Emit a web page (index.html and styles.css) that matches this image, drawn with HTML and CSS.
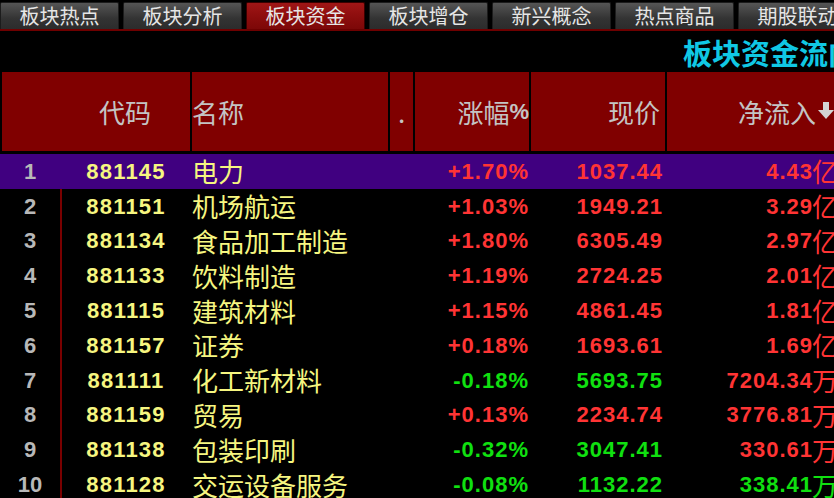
FILE: index.html
```html
<!DOCTYPE html>
<html lang="zh-CN">
<head>
<meta charset="utf-8">
<title>板块资金</title>
<link rel="stylesheet" href="styles.css">
</head>
<body>
<div class="app">
  <nav class="tabs">
    <div class="tab">板块热点</div>
    <div class="tab">板块分析</div>
    <div class="tab active">板块资金</div>
    <div class="tab">板块增仓</div>
    <div class="tab">新兴概念</div>
    <div class="tab">热点商品</div>
    <div class="tab">期股联动</div>
  </nav>
  <div class="titlebar"><span class="title">板块资金流向</span></div>
  <div class="table">
    <div class="row head">
      <div class="c num"></div>
      <div class="c code">代码</div>
      <div class="c name sep">名称</div>
      <div class="c dot sep">.</div>
      <div class="c chg sep">涨幅<span class="pct">%</span></div>
      <div class="c price sep">现价</div>
      <div class="c net sep">净流入<svg class="arrow" viewBox="0 0 16 18" width="16" height="18"><rect x="5" y="0" width="6" height="9"/><polygon points="0,8 16,8 8,17"/></svg></div>
    </div>
    <div class="row sel">
      <div class="c num">1</div><div class="c code">881145</div><div class="c name">电力</div><div class="c dot"></div>
      <div class="c chg up">+1.70%</div><div class="c price up">1037.44</div><div class="c net up">4.43<span class="unit">亿</span></div>
    </div>
    <div class="row">
      <div class="c num">2</div><div class="c code">881151</div><div class="c name">机场航运</div><div class="c dot"></div>
      <div class="c chg up">+1.03%</div><div class="c price up">1949.21</div><div class="c net up">3.29<span class="unit">亿</span></div>
    </div>
    <div class="row">
      <div class="c num">3</div><div class="c code">881134</div><div class="c name">食品加工制造</div><div class="c dot"></div>
      <div class="c chg up">+1.80%</div><div class="c price up">6305.49</div><div class="c net up">2.97<span class="unit">亿</span></div>
    </div>
    <div class="row">
      <div class="c num">4</div><div class="c code">881133</div><div class="c name">饮料制造</div><div class="c dot"></div>
      <div class="c chg up">+1.19%</div><div class="c price up">2724.25</div><div class="c net up">2.01<span class="unit">亿</span></div>
    </div>
    <div class="row">
      <div class="c num">5</div><div class="c code">881115</div><div class="c name">建筑材料</div><div class="c dot"></div>
      <div class="c chg up">+1.15%</div><div class="c price up">4861.45</div><div class="c net up">1.81<span class="unit">亿</span></div>
    </div>
    <div class="row">
      <div class="c num">6</div><div class="c code">881157</div><div class="c name">证券</div><div class="c dot"></div>
      <div class="c chg up">+0.18%</div><div class="c price up">1693.61</div><div class="c net up">1.69<span class="unit">亿</span></div>
    </div>
    <div class="row">
      <div class="c num">7</div><div class="c code">881111</div><div class="c name">化工新材料</div><div class="c dot"></div>
      <div class="c chg down">-0.18%</div><div class="c price down">5693.75</div><div class="c net up">7204.34<span class="unit">万</span></div>
    </div>
    <div class="row">
      <div class="c num">8</div><div class="c code">881159</div><div class="c name">贸易</div><div class="c dot"></div>
      <div class="c chg up">+0.13%</div><div class="c price up">2234.74</div><div class="c net up">3776.81<span class="unit">万</span></div>
    </div>
    <div class="row">
      <div class="c num">9</div><div class="c code">881138</div><div class="c name">包装印刷</div><div class="c dot"></div>
      <div class="c chg down">-0.32%</div><div class="c price down">3047.41</div><div class="c net up">330.61<span class="unit">万</span></div>
    </div>
    <div class="row">
      <div class="c num">10</div><div class="c code">881128</div><div class="c name">交运设备服务</div><div class="c dot"></div>
      <div class="c chg down">-0.08%</div><div class="c price down">1132.22</div><div class="c net down">338.41<span class="unit">万</span></div>
    </div>
  </div>
</div>
</body>
</html>
```
FILE: styles.css
```css
html, body {
  margin: 0;
  padding: 0;
  background: #000;
}
body {
  width: 834px;
  height: 498px;
  overflow: hidden;
  font-family: "Noto Sans CJK SC", "Liberation Sans", sans-serif;
}
.app {
  width: 834px;
  height: 498px;
  overflow: hidden;
  background: #000;
}
.tabs {
  display: flex;
  gap: 4px;
  height: 29px;
  border-bottom: 2px solid #6e0000;
  box-sizing: content-box;
  overflow: hidden;
  white-space: nowrap;
}
.tab {
  flex: 0 0 119px;
  box-sizing: border-box;
  margin-top: 2px;
  height: 27px;
  background: linear-gradient(#555555, #333333 60%, #2c2c2c);
  border: 1px solid #1c1c1c;
  border-bottom: none;
  border-radius: 2px 2px 0 0;
  color: #e6e6e6;
  font-size: 20px;
  line-height: 26px;
  text-align: center;
}
.tab.active {
  background: linear-gradient(#a01616, #8a0c0c 60%, #7c0808);
  border-color: #3a0000;
}
.titlebar {
  height: 41px;
  display: flex;
  align-items: center;
  white-space: nowrap;
  overflow: hidden;
}
.title {
  margin-left: 683px;
  color: #10c8e4;
  font-size: 29px;
  font-weight: 700;
  line-height: 36px;
}
.table {
  display: flex;
  flex-direction: column;
}
.row {
  display: grid;
  grid-template-columns: 60px 130px 198px 25px 116px 136px 175px;
  height: 34.8px;
  align-items: center;
  white-space: nowrap;
  line-height: 1.15;
}
.row .c {
  box-sizing: border-box;
  height: 100%;
  display: flex;
  align-items: center;
}
.row.head {
  height: 82px;
  background: #800000;
  border-bottom: 3px solid #000;
  box-sizing: border-box;
  color: #c4c4c4;
  font-size: 26px;
}
.row.head .c {
  height: 79px;
}
.row.head .num {
  border-left: 2px solid #000;
}
.row.head .sep {
  border-left: 2px solid #000;
}
.row.head .code {
  justify-content: center;
}
.row.head .name {
  justify-content: flex-start;
  padding-left: 0;
}
.row.head .dot {
  justify-content: center;
}
.row.head .chg {
  justify-content: flex-end;
  padding-right: 0;
}
.row.head .price {
  justify-content: flex-end;
  padding-right: 5px;
}
.row.head .net {
  justify-content: flex-end;
  padding-right: 6px;
}
.pct {
  font-family: "Liberation Sans", sans-serif;
  font-weight: 700;
  font-size: 22px;
}
.arrow {
  fill: #d4d4d4;
  margin-left: 2px;
  margin-top: -2px;
}
.row.sel {
  background: #400080;
}
.num {
  justify-content: center;
  font-family: "Liberation Sans", sans-serif;
  font-weight: 700;
  font-size: 22px;
  color: #b8b8b8;
}
.code {
  justify-content: center;
  font-family: "Liberation Sans", sans-serif;
  font-weight: 700;
  font-size: 22px;
  letter-spacing: 1.2px;
  color: #f6f680;
  border-left: 2px solid #7a0000;
}
.row.sel .code {
  border-left-color: #400080;
}
.row.head .code {
  border-left: none;
  color: #c4c4c4;
  font-family: "Noto Sans CJK SC", sans-serif;
  font-weight: 400;
  font-size: 26px;
  letter-spacing: 0;
}
.name {
  justify-content: flex-start;
  padding-left: 2px;
  font-size: 26px;
  color: #f6f680;
}
.row.head .name {
  color: #c4c4c4;
}
.chg, .price, .net {
  justify-content: flex-end;
  font-family: "Liberation Sans", sans-serif;
  font-weight: 700;
  font-size: 22px;
  letter-spacing: 1px;
}
.row.head .chg, .row.head .price, .row.head .net {
  font-family: "Noto Sans CJK SC", sans-serif;
  font-weight: 400;
  font-size: 26px;
  letter-spacing: 0;
}
.chg { padding-right: 0; }
.price { padding-right: 2px; }
.net { padding-right: 2px; }
.unit {
  font-family: "Noto Sans CJK SC", sans-serif;
  font-weight: 400;
  font-size: 26px;
  letter-spacing: 0;
  margin-left: -1px;
}
.up { color: #ff3434; }
.down { color: #10e010; }
```
